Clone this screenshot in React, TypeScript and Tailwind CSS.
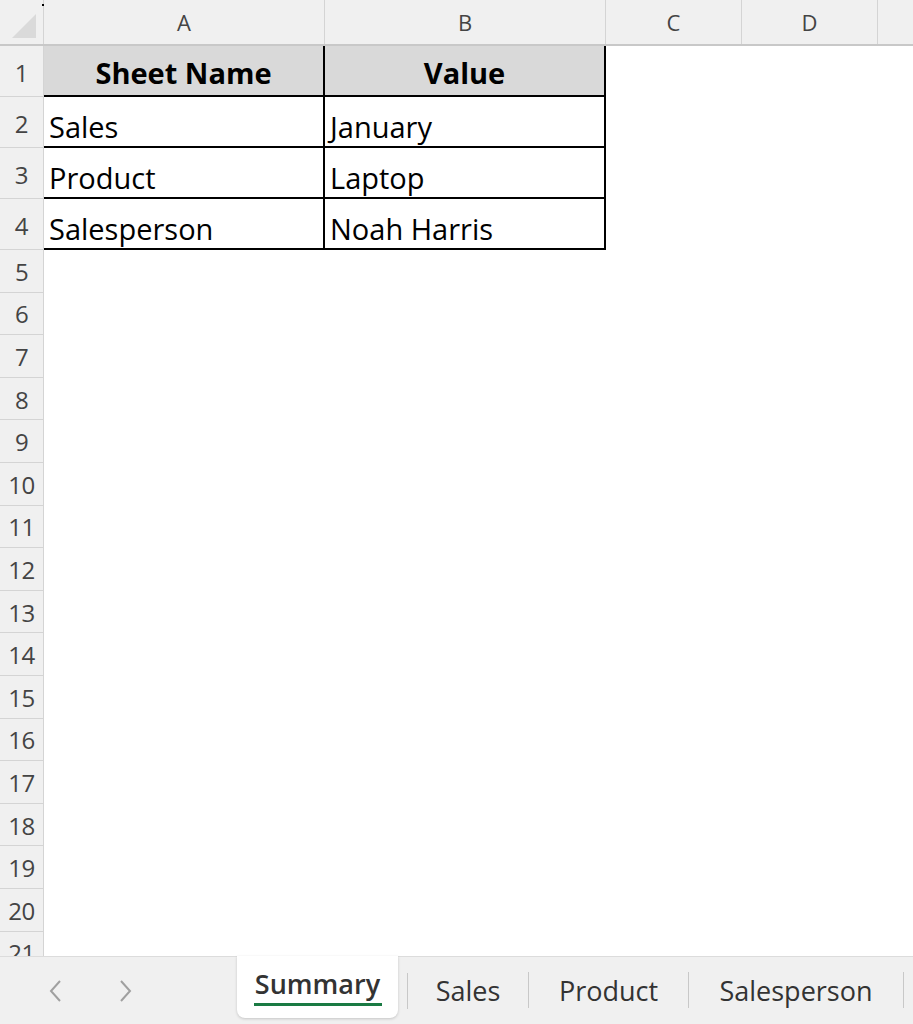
import React from "react";

const rowsTable = [
  ["Sales", "January"],
  ["Product", "Laptop"],
  ["Salesperson", "Noah Harris"],
];

const emptyRows = Array.from({ length: 17 }, (_, i) => i + 5);

export default function App() {
  return (
    <div className="w-[913px] h-[1024px] flex flex-col overflow-hidden bg-white" style={{ fontFamily: "'Open Sans', 'Noto Sans', sans-serif" }}>
      <div className="flex-1 overflow-hidden relative">
        {/* column header */}
        <div className="flex h-[46px] bg-[#f0f0f0] border-b-2 border-[#c8c8c8] text-[#444] text-[22px]">
          <div className="w-[44px] shrink-0 border-r border-[#d4d4d4] relative">
            <div className="absolute left-[12px] top-[14px] w-0 h-0 border-l-[24px] border-l-transparent border-b-[24px] border-b-[#dadada]" />
            <div className="absolute left-[42px] top-[4px] w-[2px] h-[2px] bg-black" />
          </div>
          <div className="w-[281px] shrink-0 border-r border-[#d4d4d4] flex items-center justify-center">A</div>
          <div className="w-[281px] shrink-0 border-r border-[#d4d4d4] flex items-center justify-center">B</div>
          <div className="w-[136px] shrink-0 border-r border-[#d4d4d4] flex items-center justify-center">C</div>
          <div className="w-[136px] shrink-0 border-r border-[#d4d4d4] flex items-center justify-center">D</div>
          <div className="flex-1" />
        </div>
        {/* row 1 */}
        <div className="flex h-[51px]">
          <div className="w-[44px] shrink-0 bg-[#f0f0f0] border-r border-b border-[#d4d4d4] text-[#444] text-[24px] flex items-center justify-center pt-[4px]">1</div>
          <div className="w-[281px] shrink-0 bg-[#d9d9d9] border-r-2 border-b-2 border-black flex items-center justify-center font-bold text-[29px] leading-none text-black pt-[4px]">Sheet Name</div>
          <div className="w-[281px] shrink-0 bg-[#d9d9d9] border-r-2 border-b-2 border-black flex items-center justify-center font-bold text-[29px] leading-none text-black pt-[4px]">Value</div>
          <div className="flex-1" />
        </div>
        {rowsTable.map((r, i) => (
          <div key={i} className="flex h-[51px]">
            <div className="w-[44px] shrink-0 bg-[#f0f0f0] border-r border-b border-[#d4d4d4] text-[#444] text-[24px] flex items-center justify-center pt-[4px]">{i + 2}</div>
            <div className="w-[281px] shrink-0 border-r-2 border-b-2 border-black flex items-center pl-[5px] pt-[9px] text-[29px] leading-none text-black">{r[0]}</div>
            <div className="w-[281px] shrink-0 border-r-2 border-b-2 border-black flex items-center pl-[5px] pt-[9px] text-[29px] leading-none text-black">{r[1]}</div>
            <div className="flex-1" />
          </div>
        ))}
        {emptyRows.map((n) => (
          <div key={n} className="flex h-[42.6px]">
            <div className="w-[44px] shrink-0 bg-[#f0f0f0] border-r border-b border-[#d4d4d4] text-[#444] text-[24px] tracking-[-0.5px] flex items-center justify-center pt-[2px]">{n}</div>
            <div className="flex-1" />
          </div>
        ))}
      </div>
      {/* sheet tabs */}
      <div className="h-[68px] shrink-0 bg-[#f0f0f0] border-t border-[#dcdcdc] flex items-start text-[#333] text-[27px] relative">
        <div className="w-[237px] h-full flex items-center">
          <svg className="ml-[46px]" width="20" height="24" viewBox="0 0 20 24" fill="none" stroke="#a0a0a0" strokeWidth="2">
            <path d="M14 2 L5 12 L14 22" />
          </svg>
          <svg className="ml-[49px]" width="20" height="24" viewBox="0 0 20 24" fill="none" stroke="#a0a0a0" strokeWidth="2">
            <path d="M6 2 L15 12 L6 22" />
          </svg>
        </div>
        <div className="w-[161px] h-[62px] -mt-[1px] bg-white rounded-b-[8px] shadow-[0_1px_3px_rgba(0,0,0,0.18)] flex flex-col items-center justify-center">
          <span className="font-semibold text-[#333] leading-none pt-[2px]">Summary</span>
          <span className="w-[128px] h-[3px] bg-[#1a7a43] mt-[6px]" />
        </div>
        <div className="w-[10px] h-full flex items-center justify-end">
          <div className="w-[1px] h-[36px] bg-[#c8c8c8]" />
        </div>
        <div className="w-[120px] h-full flex items-center justify-center pt-[2px]">Sales</div>
        <div className="w-[1px] h-[36px] mt-[15px] bg-[#c8c8c8]" />
        <div className="w-[159px] h-full flex items-center justify-center pt-[2px]">Product</div>
        <div className="w-[1px] h-[36px] mt-[15px] bg-[#c8c8c8]" />
        <div className="w-[214px] h-full flex items-center justify-center pt-[2px]">Salesperson</div>
        <div className="w-[1px] h-[36px] mt-[15px] bg-[#c8c8c8]" />
      </div>
    </div>
  );
}
